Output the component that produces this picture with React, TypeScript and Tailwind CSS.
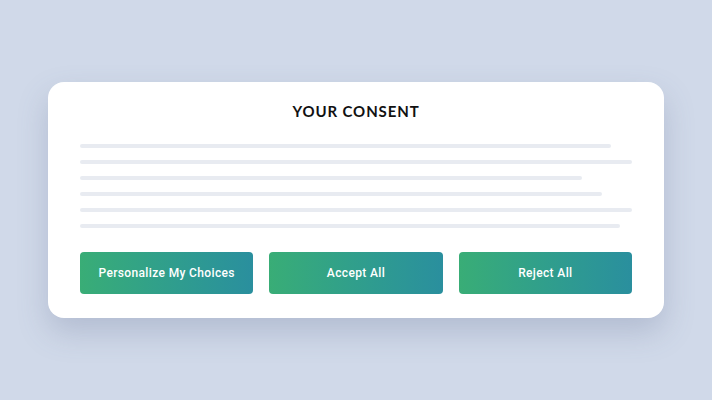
const lines = ["w-[531px]", "w-[552px]", "w-[502px]", "w-[522px]", "w-[552px]", "w-[540px]"];

const buttons = ["Personalize My Choices", "Accept All", "Reject All"];

export default function App() {
  return (
    <div className="w-[712px] h-[400px] bg-[#d0d9e9] flex items-center justify-center">
      {/* Consent card */}
      <div className="w-[616px] h-[236px] bg-white rounded-2xl px-8 pt-[20px] shadow-[0_14px_30px_rgba(90,105,140,0.25)] flex flex-col">
        <h1 className="text-center text-[15px] leading-[18px] font-bold tracking-[0.06em] text-[#111] font-['Lato',sans-serif]">
          YOUR CONSENT
        </h1>

        <div className="mt-[24px] flex flex-col gap-3">
          {lines.map((w, i) => (
            <div key={i} className={`${w} h-1 rounded-full bg-[#e8ebf1]`} />
          ))}
        </div>

        <div className="mt-[24px] grid grid-cols-3 gap-4">
          {buttons.map((b) => (
            <button
              key={b}
              className="h-[42px] rounded bg-gradient-to-r from-[#39ad76] to-[#2a8f9e] text-white text-[12px] font-medium tracking-[0.03em] font-['Roboto',sans-serif]"
            >
              {b}
            </button>
          ))}
        </div>
      </div>
    </div>
  );
}
